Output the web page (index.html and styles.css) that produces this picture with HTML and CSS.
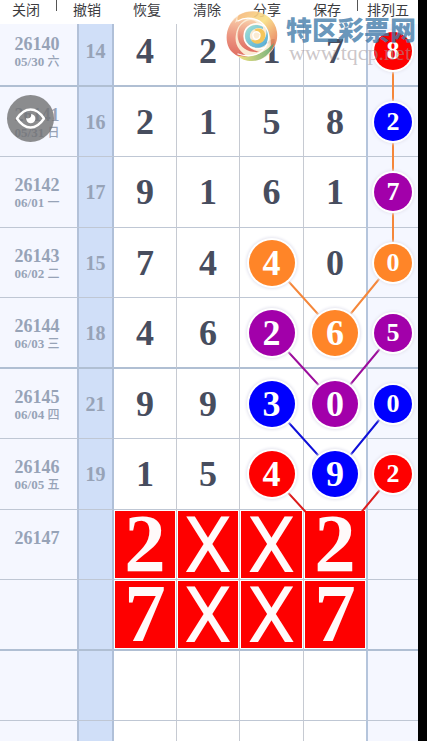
FILE: index.html
```html
<!DOCTYPE html>
<html lang="zh-CN">
<head>
<meta charset="utf-8">
<meta name="viewport" content="width=device-width, initial-scale=1">
<title>排列五</title>
<link rel="stylesheet" href="styles.css">
</head>
<body>
<main class="app">
  <header class="toolbar">
    <button type="button">关闭</button>
    <span class="sep"></span>
    <nav class="actions">
      <button type="button">撤销</button>
      <button type="button">恢复</button>
      <button type="button">清除</button>
      <button type="button">分享</button>
      <button type="button">保存</button>
    </nav>
    <span class="sep sep-last"></span>
    <button type="button">排列五</button>
  </header>

  <section class="board">
    <table class="chart">
      <colgroup>
        <col class="c-issue"><col class="c-sum"><col class="c-num"><col class="c-num"><col class="c-wide"><col class="c-wide"><col class="c-last">
      </colgroup>
      <tbody>
        <tr class="thick"><th scope="row">26140<small>05/30 <i>六</i></small></th><td class="sum">14</td><td>4</td><td>2</td><td>1</td><td class="edge">7</td><td class="last"><span class="ball small red">8</span></td></tr>
        <tr><th scope="row">26141<small>05/31 <i>日</i></small></th><td class="sum">16</td><td>2</td><td>1</td><td>5</td><td class="edge">8</td><td class="last"><span class="ball small blue">2</span></td></tr>
        <tr><th scope="row">26142<small>06/01 <i>一</i></small></th><td class="sum">17</td><td>9</td><td>1</td><td>6</td><td class="edge">1</td><td class="last"><span class="ball small purple">7</span></td></tr>
        <tr><th scope="row">26143<small>06/02 <i>二</i></small></th><td class="sum">15</td><td>7</td><td>4</td><td><span class="ball orange">4</span></td><td class="edge">0</td><td class="last"><span class="ball small orange">0</span></td></tr>
        <tr class="thick"><th scope="row">26144<small>06/03 <i>三</i></small></th><td class="sum">18</td><td>4</td><td>6</td><td><span class="ball purple">2</span></td><td class="edge"><span class="ball orange">6</span></td><td class="last"><span class="ball small purple">5</span></td></tr>
        <tr><th scope="row">26145<small>06/04 <i>四</i></small></th><td class="sum">21</td><td>9</td><td>9</td><td><span class="ball blue">3</span></td><td class="edge"><span class="ball purple">0</span></td><td class="last"><span class="ball small blue">0</span></td></tr>
        <tr><th scope="row">26146<small>06/05 <i>五</i></small></th><td class="sum">19</td><td>1</td><td>5</td><td><span class="ball red">4</span></td><td class="edge"><span class="ball blue">9</span></td><td class="last"><span class="ball small red">2</span></td></tr>
        <tr><th scope="row">26147<small></small></th><td class="sum"></td><td><span class="tile">2</span></td><td><span class="tile cross">X</span></td><td><span class="tile cross">X</span></td><td class="edge"><span class="tile">2</span></td><td class="last"></td></tr>
        <tr class="thick"><th></th><td class="sum"></td><td><span class="tile">7</span></td><td><span class="tile cross">X</span></td><td><span class="tile cross">X</span></td><td class="edge"><span class="tile">7</span></td><td class="last"></td></tr>
        <tr><th></th><td class="sum"></td><td></td><td></td><td></td><td class="edge"></td><td class="last"></td></tr>
        <tr><th></th><td class="sum"></td><td></td><td></td><td></td><td class="edge"></td><td class="last"></td></tr>
      </tbody>
    </table>
    <svg class="links" viewBox="0 0 418 725" preserveAspectRatio="none" aria-hidden="true">
      <path stroke="#f5873a" d="M393 35V246M271 246L335 317L393 246"/>
      <path stroke="#9c0d9c" d="M271 317L335 387L393 317"/>
      <path stroke="#1010d8" d="M271 387L335 458L393 387"/>
      <path stroke="#dc1c1c" d="M271 458L335 528L393 458"/>
    </svg>
    <button type="button" class="eye" aria-label="显示">
      <svg viewBox="0 0 47 47" aria-hidden="true">
        <path fill="none" stroke="#fff" stroke-width="2.4" stroke-linejoin="round" d="M10 23.500C15 16 19 14.500 23.500 14.500S32 16 37 23.500C32 31 28 32.500 23.500 32.500S15 31 10 23.500Z"/>
        <path fill="#fff" d="M24 19A4.600 4.600 0 1 1 19.200 23C22 24.500 25 22 24 19Z"/>
      </svg>
    </button>
  </section>

  <div class="brand">
    <svg class="logo" viewBox="0 0 52 52" aria-hidden="true">
      <defs>
        <linearGradient id="g1" x1="0.500" y1="0" x2="0.400" y2="1"><stop offset="0" stop-color="#f8c9a0"/><stop offset=".5" stop-color="#ea8b74"/><stop offset="1" stop-color="#dc5c50"/></linearGradient>
        <linearGradient id="g2" x1="0" y1="0" x2="1" y2="1"><stop offset="0" stop-color="#f6b27b"/><stop offset=".45" stop-color="#f9e084"/><stop offset="1" stop-color="#e5624c"/></linearGradient>
        <linearGradient id="g3" x1="0" y1="0" x2="1" y2="0"><stop offset="0" stop-color="#f3e070"/><stop offset="1" stop-color="#62a872"/></linearGradient>
        <linearGradient id="g4" x1="0" y1="0" x2="1" y2="1"><stop offset="0" stop-color="#9adfd0"/><stop offset="1" stop-color="#3f9fd4"/></linearGradient>
      </defs>
      <circle cx="26" cy="26" r="25" fill="#fbe9cf"/>
      <path fill="url(#g1)" d="M11 7C1 14-2 28 3 38C7 45 14 48 23 47C13 42 8 34 10 24C11 17 15 12 21 9C17 8 13 9 9 13Z"/>
      <path fill="url(#g2)" d="M13 5C29-4 49 5 51 22C52 31 49 37 44 42C47 28 42 15 31 10C24 7 17 8 12 11C11 9 11 7 13 5Z"/>
      <path fill="url(#g1)" d="M25 10C15 11 10 20 12 29C14 38 23 43 33 42C23 39 17 33 18 25C18 18 24 13 31 13C29 11 27 10 25 10Z"/>
      <path fill="url(#g3)" d="M12 46C25 48 38 44 48 33C45 44 36 51 26 51C20 51 15 49 12 46Z"/>
      <path fill="url(#g4)" d="M37 17C28 12 19 17 19 26C19 35 29 41 38 36C44 32 45 23 40 17C42 26 38 33 31 33C25 32 22 27 25 22C28 18 33 17 37 19Z"/>
      <path fill="#f4c04a" d="M28 20C36 15 42 23 38 30C34 36 26 34 25 29C29 32 34 30 34 26C34 23 31 21 28 20Z"/>
      <path fill="none" stroke="#fff" stroke-width="1.300" stroke-linecap="round" d="M38 16C28 11 18 16 18 26C18 36 29 42 40 37M34 25C34 30 28 31 27 26C26 22 32 20 34 24M12 11C20 6 32 8 38 15C46 24 43 37 33 43C26 47 17 46 12 44"/>
    </svg>
    <div class="brand-text">
      <strong>特区彩票网</strong>
      <span>www.tqcp.net</span>
    </div>
  </div>
</main>
</body>
</html>
```
FILE: styles.css
```css
* {
  box-sizing: border-box;
}

body {
  margin: 0;
  background: #000;
  overflow: hidden;
}

.app {
  position: relative;
  display: flex;
  flex-direction: column;
  height: 100vh;
  margin-right: 9px;
  background: #fff;
  overflow: hidden;
}

button {
  padding: 0;
  border: 0;
  background: none;
  color: #3c3c3f;
  font: 14px/18px "Noto Sans CJK SC", sans-serif;
  white-space: nowrap;
}

.toolbar {
  position: relative;
  z-index: 3;
  flex: none;
  display: flex;
  align-items: flex-start;
  height: 24px;
  padding: 0 9px 0 12px;
  background: #fff;
}

.actions {
  flex: 1;
  display: flex;
  justify-content: space-between;
}

.sep {
  width: 1px;
  height: 11px;
  margin: 0 16px;
  background: #555;
}

.sep-last {
  margin-right: 9px;
}

.board {
  position: relative;
  flex: 1;
  min-height: 0;
  margin-top: -8px;
}

.chart {
  width: 100%;
  table-layout: fixed;
  border-collapse: separate;
  border-spacing: 0;
  font-family: "Liberation Serif", "Noto Sans CJK SC", serif;
  font-weight: 700;
  color: #474d5e;
}

.c-issue { width: 79px; }
.c-sum { width: 35px; }
.c-num { width: 63px; }
.c-wide { width: 64px; }
.c-last { width: 50px; }

tr { height: 70px; }
tr:nth-child(odd) { height: 71px; }

td,
th {
  padding: 0;
  border-right: 1px solid #c6cad2;
  border-bottom: 1px solid #bfc7d4;
  text-align: center;
  vertical-align: middle;
}

td {
  font-size: 36px;
  line-height: 40px;
}

.thick td,
.thick th {
  border-bottom: 2px solid #b0bfd3;
}

th {
  padding: 2px 3px 0 0;
  border-right: 2px solid #b3c1d8;
  background: #f5f7ff;
  color: #97a3b7;
  font-size: 18px;
  line-height: 20px;
}

th small {
  display: block;
  height: 16px;
  font-size: 13px;
  line-height: 16px;
}

th i {
  font-size: 12px;
  font-style: normal;
  font-weight: 500;
}

.sum {
  border-right: 2px solid #b0c0d8;
  background: #d0dff8;
  color: #97a3b7;
  font-size: 20px;
}

.edge {
  border-right: 2px solid #b5c5dc;
}

.last {
  border-right: 0;
  background: #f5f7ff;
}

.ball {
  position: relative;
  z-index: 2;
  display: block;
  width: 46px;
  height: 46px;
  margin: 0 auto;
  border-radius: 50%;
  box-shadow: 0 0 0 2px #fff, 0 0 3px 3px #e6e6f0;
  color: #fff;
  font-size: 36px;
  line-height: 46px;
}

.small {
  width: 38px;
  height: 38px;
  font-size: 26px;
  line-height: 38px;
}

.red { background: #fe0000; }
.blue { background: #0000fe; }
.purple { background: #a200aa; }
.orange { background: #ff8528; }

.tile {
  position: relative;
  z-index: 2;
  display: block;
  height: 67px;
  margin: 0 1px;
  background: #fe0000;
  color: #fffafa;
  font-size: 83px;
  line-height: 64px;
}

.cross {
  font-family: Roboto, sans-serif;
  font-size: 77px;
  font-weight: 400;
  line-height: 70px;
}

.links {
  position: absolute;
  top: 0;
  left: 0;
  z-index: 1;
  width: 100%;
  height: 725px;
  fill: none;
  stroke-width: 2;
  pointer-events: none;
}

.eye {
  position: absolute;
  top: 79px;
  left: 7px;
  z-index: 3;
  width: 47px;
  height: 47px;
  border-radius: 50%;
  background: rgba(112, 112, 114, .8);
}

.eye svg {
  display: block;
}

.brand {
  position: absolute;
  top: 10px;
  right: 0;
  z-index: 4;
  display: flex;
  gap: 8px;
  pointer-events: none;
}

.logo {
  width: 52px;
  height: 52px;
  opacity: .9;
}

.brand-text {
  display: flex;
  flex-direction: column;
  width: 132px;
  padding-top: 5px;
  white-space: nowrap;
}

.brand-text strong {
  color: rgba(65, 122, 168, .8);
  font: 900 26px/28px "Noto Sans CJK SC", sans-serif;
}

.brand-text span {
  padding-left: 3px;
  color: rgba(160, 150, 155, .55);
  font: 22px/20px "Liberation Serif", serif;
}
```
